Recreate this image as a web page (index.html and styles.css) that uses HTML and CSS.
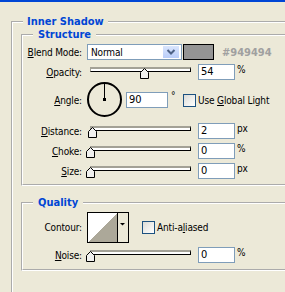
FILE: index.html
```html
<!DOCTYPE html>
<html lang="en">
<head>
    <meta charset="UTF-8">
    <title>Layer Style - Inner Shadow</title>
    <link rel="stylesheet" href="styles.css">
</head>
<body>
    <fieldset class="group outer">
        <legend>Inner Shadow</legend>

        <fieldset class="group structure">
            <legend>Structure</legend>

            <div class="row">
                <span class="lbl"><u>B</u>lend Mode:</span>
                <div class="combo">
                    <span class="combo-text">Normal</span>
                    <span class="combo-btn">
                        <svg width="16" height="12" viewBox="0 0 16 12"><polyline points="4.5,4 8,7.5 11.5,4" fill="none" stroke="#4d6185" stroke-width="2"/></svg>
                    </span>
                </div>
                <span class="swatch"></span>
                <span class="hex">#949494</span>
            </div>

            <div class="row">
                <span class="lbl"><u>O</u>pacity:</span>
                <div class="slider">
                    <div class="track"></div>
                    <svg class="thumb" style="left: 53px" width="9" height="11" viewBox="0 0 9 11"><polygon points="0.5,10.5 0.5,4.5 4.5,0.5 8.5,4.5 8.5,10.5" fill="#f0f0ee" stroke="#000"/></svg>
                </div>
                <span class="field">54</span>
                <span class="unit">%</span>
            </div>

            <div class="row angle-row">
                <span class="lbl"><u>A</u>ngle:</span>
                <svg class="dial" width="35" height="35" viewBox="0 0 35 35">
                    <circle cx="17.5" cy="17.5" r="16.5" fill="none" stroke="#000" stroke-width="2"/>
                    <line x1="17.5" y1="17.5" x2="17.5" y2="1" stroke="#000" stroke-width="1"/>
                    <rect x="16" y="16" width="3" height="3" fill="#000"/>
                </svg>
                <span class="field wide">90</span>
                <span class="deg">&deg;</span>
                <span class="check"></span>
                <span class="check-label">Use <u>G</u>lobal Light</span>
            </div>

            <div class="row">
                <span class="lbl"><u>D</u>istance:</span>
                <div class="slider">
                    <div class="track"></div>
                    <svg class="thumb" style="left: 1px" width="9" height="11" viewBox="0 0 9 11"><polygon points="0.5,10.5 0.5,4.5 4.5,0.5 8.5,4.5 8.5,10.5" fill="#f0f0ee" stroke="#000"/></svg>
                </div>
                <span class="field">2</span>
                <span class="unit">px</span>
            </div>

            <div class="row">
                <span class="lbl"><u>C</u>hoke:</span>
                <div class="slider">
                    <div class="track"></div>
                    <svg class="thumb" style="left: -1px" width="9" height="11" viewBox="0 0 9 11"><polygon points="0.5,10.5 0.5,4.5 4.5,0.5 8.5,4.5 8.5,10.5" fill="#f0f0ee" stroke="#000"/></svg>
                </div>
                <span class="field">0</span>
                <span class="unit">%</span>
            </div>

            <div class="row">
                <span class="lbl"><u>S</u>ize:</span>
                <div class="slider">
                    <div class="track"></div>
                    <svg class="thumb" style="left: -1px" width="9" height="11" viewBox="0 0 9 11"><polygon points="0.5,10.5 0.5,4.5 4.5,0.5 8.5,4.5 8.5,10.5" fill="#f0f0ee" stroke="#000"/></svg>
                </div>
                <span class="field">0</span>
                <span class="unit">px</span>
            </div>
        </fieldset>

        <fieldset class="group quality">
            <legend>Quality</legend>

            <div class="row contour-row">
                <span class="lbl">Contour:</span>
                <div class="contour">
                    <svg class="contour-preview" width="29" height="29" viewBox="0 0 29 29" shape-rendering="crispEdges">
                        <rect width="29" height="29" fill="#fff"/>
                        <polygon points="0,29 29,0 29,29" fill="#aca899"/>
                    </svg>
                    <span class="contour-drop">
                        <svg width="10" height="29" viewBox="0 0 10 29"><polygon points="2,10 7,10 4.5,12.5" fill="#000"/></svg>
                    </span>
                </div>
                <span class="check aa"></span>
                <span class="check-label">Anti-a<u>l</u>iased</span>
            </div>

            <div class="row">
                <span class="lbl"><u>N</u>oise:</span>
                <div class="slider">
                    <div class="track"></div>
                    <svg class="thumb" style="left: -1px" width="9" height="11" viewBox="0 0 9 11"><polygon points="0.5,10.5 0.5,4.5 4.5,0.5 8.5,4.5 8.5,10.5" fill="#f0f0ee" stroke="#000"/></svg>
                </div>
                <span class="field">0</span>
                <span class="unit">%</span>
            </div>
        </fieldset>
    </fieldset>
</body>
</html>
```

FILE: styles.css
```css
html {
    overflow: hidden;
}
body {
    margin: 0;
    width: 330px;
    height: 290px;
    background-color: #ece9d8;
    border-top: 2px solid #0046d5;
    font-family: "DejaVu Sans", sans-serif;
    font-stretch: condensed;
    font-size: 10px;
    letter-spacing: -0.15px;
    color: #000;
}
u {
    text-decoration: underline;
    text-underline-offset: 1px;
}

/* etched group boxes */
.group {
    margin: 0;
    padding: 0;
    min-width: 0;
    border: 2px groove #fff;
}
.group > legend {
    font-size: 11px;
    font-weight: bold;
    letter-spacing: 0;
    color: #0046d5;
    line-height: 14px;
    background-color: #ece9d8;
}
.outer {
    margin: 13px 0 0 11px;
    padding: 0 0 40px 8px;
}
.outer > legend {
    margin-left: 2px;
    padding: 0 4px;
}
.structure {
    margin-top: -1px;
    padding: 2px 0 5px 0;
}
.quality {
    margin-top: 10px;
    padding: 2px 0 6px 0;
}
.structure > legend,
.quality > legend {
    margin-left: 10px;
    padding: 0 5px;
}

/* rows */
.row {
    display: flex;
    align-items: center;
    height: 16px;
    margin-bottom: 4px;
}
.row:last-child {
    margin-bottom: 0;
}
.angle-row {
    height: 36px;
    margin-top: -2px;
    margin-bottom: 5px;
}
.contour-row {
    height: 31px;
}
.lbl {
    width: 59px;
    margin-right: 5px;
    text-align: right;
    white-space: nowrap;
}

/* combo box */
.combo {
    display: flex;
    align-items: center;
    justify-content: space-between;
    box-sizing: border-box;
    width: 95px;
    height: 16px;
    padding: 1px;
    border: 1px solid #7f9db9;
    background-color: #fff;
}
.combo-text {
    padding-left: 2px;
}
.combo-btn {
    display: block;
    width: 16px;
    height: 12px;
    margin-right: 1px;
    background: linear-gradient(#d9e5fd, #b9cdf9);
}
.combo-btn svg {
    display: block;
}
.swatch {
    box-sizing: border-box;
    width: 31px;
    height: 16px;
    margin-left: 1px;
    border: 1px solid #000;
    background-color: #949494;
}
.hex {
    margin-left: 8px;
    font-size: 11px;
    font-weight: bold;
    letter-spacing: 0;
    color: #a0a0a0;
}

/* slider */
.slider {
    position: relative;
    width: 107px;
    height: 16px;
    align-self: flex-start;
}
.track {
    box-sizing: border-box;
    width: 101px;
    height: 5px;
    margin: 3px 0 0 3px;
    border-style: solid;
    border-width: 2px 1px 1px 1px;
    border-color: #a3a196 #000 #000 #a3a196;
    background-color: #fff;
}
.thumb {
    position: absolute;
    top: 4px;
    display: block;
}

/* text fields */
.field {
    box-sizing: border-box;
    width: 37px;
    height: 16px;
    margin-left: 4px;
    padding-left: 2px;
    border: 1px solid #7f9db9;
    background-color: #fff;
    font-size: 11px;
    line-height: 14px;
}
.field.wide {
    width: 42px;
}
.unit {
    margin-left: 2px;
    align-self: flex-start;
}
.deg {
    width: 12px;
    padding-left: 3px;
    align-self: flex-start;
    margin-top: 8px;
}

/* checkbox */
.check {
    box-sizing: border-box;
    width: 13px;
    height: 13px;
    border: 1px solid #1c5180;
    background: linear-gradient(135deg, #dcdcd7, #fff);
}
.check-label {
    margin-left: 2px;
    white-space: nowrap;
}
.check.aa {
    margin-left: 13px;
}

/* angle dial */
.dial {
    display: block;
    align-self: flex-start;
}

/* contour picker */
.contour {
    display: flex;
    width: 42px;
    height: 31px;
    box-sizing: border-box;
    border: 1px solid #000;
}
.contour-preview {
    display: block;
}
.contour-drop {
    width: 10px;
    border-left: 1px solid #000;
}
.contour-drop svg {
    display: block;
}
```
